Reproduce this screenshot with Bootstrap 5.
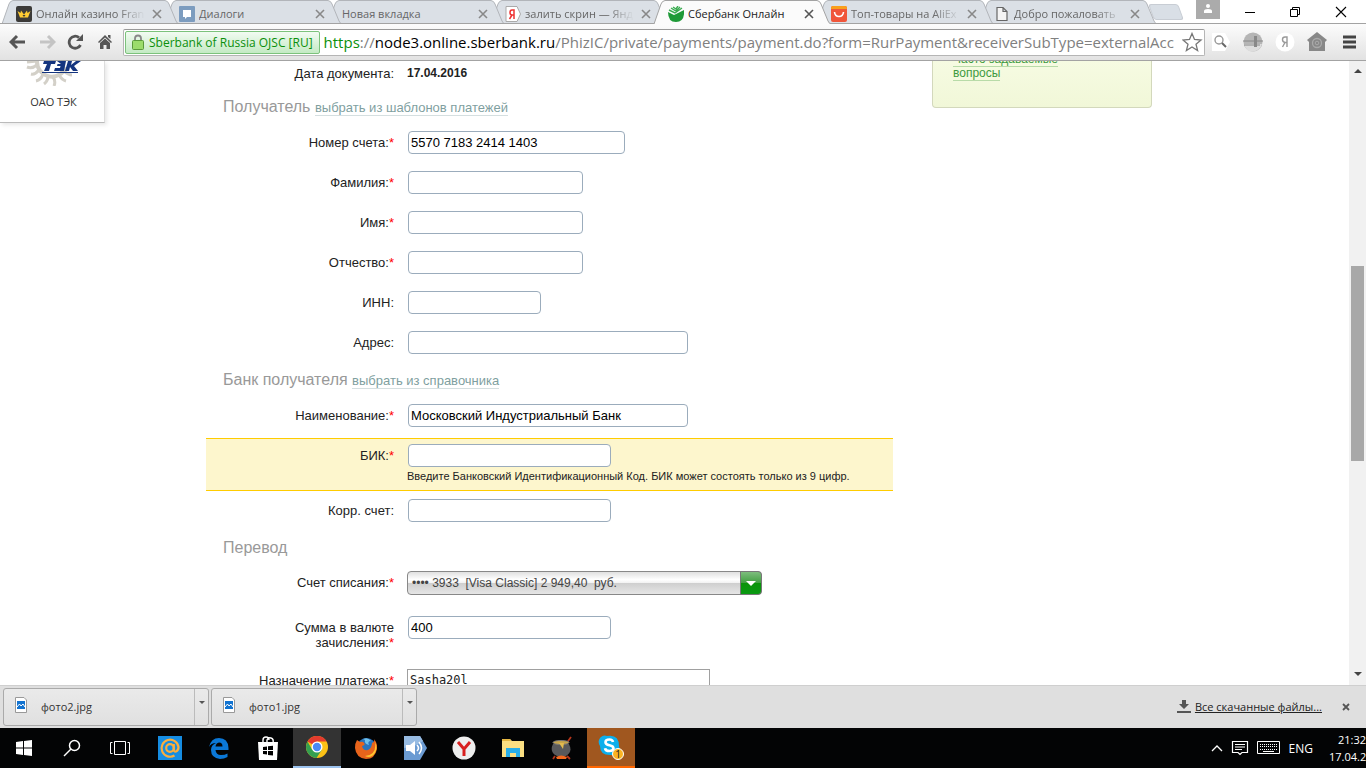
<!DOCTYPE html>
<html lang="ru">
<head>
<meta charset="utf-8">
<meta name="viewport" content="width=device-width, initial-scale=1">
<title>Сбербанк Онлайн</title>
<link href="https://cdn.jsdelivr.net/npm/bootstrap@5.3.0/dist/css/bootstrap.min.css" rel="stylesheet">
<style>
:root{--ui:"Open Sans","Noto Sans",sans-serif;--page:"Liberation Sans",Arial,sans-serif}
body{font:13px/15px var(--page);color:#222;background:#fff}
button{border:0;background:none;padding:0;color:inherit}
svg{display:block;flex:none}
/* tabs */
.tabstrip{height:24px;padding-left:2px;font:11px/24px var(--ui);position:relative}
.tabstrip::after{content:"";position:absolute;left:0;right:0;bottom:0;height:1px;background:#a3a3a3;z-index:8}
.tab-item{flex:0 1 163px;min-width:0;height:24px;position:relative;padding:2px 0 0 14px;color:#666}
.tab-shape{position:absolute;left:0;top:0;width:calc(100% + 15px);height:24px}
.tab-body{position:relative;height:24px}
.tab-name{flex:1 1 0;min-width:0;overflow:hidden;white-space:nowrap}
.tab-fade{-webkit-mask-image:linear-gradient(90deg,#000 75%,transparent);mask-image:linear-gradient(90deg,#000 75%,transparent)}
.tab-item.current{z-index:9!important;color:#222}
.tab-x{width:16px}
.newtab{width:30px;height:16px;margin:4px 0 0 8px;background:#d9dfe6;border:1px solid #c8cdd4;transform:skewX(20deg);border-radius:3px}
.userbox{width:24px;height:19px;background:#ababab}
.winbtn{width:46px;height:24px}
/* toolbar */
.toolbar{height:37px;background:linear-gradient(#fcfcfc,#e2e2e2);border-bottom:1px solid #a3a3a3;padding:0 1px 0 3px}
.navbtn{width:29px;flex:none}
.navbtn svg{margin:auto}
.addr{height:27px;background:#fff;border:1px solid #b5b5b5;border-top-color:#999;border-radius:2px;margin-left:4px;padding-left:1px;min-width:0}
.evbox{height:23px;border:1px solid #7cc27c;border-radius:2px;background:linear-gradient(#f2fbf2,#c4eac4);color:#0b8f0b;font:12px/21px var(--ui);padding:0 6px 0 5px;white-space:nowrap}
.urltext{font:15px/24px var(--ui);color:#808080;white-space:nowrap;overflow:hidden;min-width:0}
.ext{width:32px;flex:none}
/* page */
.viewport{min-height:0;overflow:hidden}
.leftcol{width:206px}
.payee{width:105px;height:62px;border-right:1px solid #ddd;border-bottom:1px solid #bbb;box-shadow:2px 2px 4px #e8e8e8;color:#333;font:11px/15px var(--ui);padding-left:3px}
.payform{flex:0 1 687px;min-width:0}
.frow{display:flex;gap:13px;min-height:40px;padding-top:8px}
.frow>label,.frow>.flabel{width:188px;flex:none;text-align:right;padding-top:4px}
.frow b.req{color:#f00;font-weight:400}
.sect{height:33px;line-height:33px;padding-left:17px;font-size:16px;color:#999;margin:0;font-weight:400}
.sect a{font-size:13px;color:#7f9f9f;text-decoration:none;border-bottom:1px solid #d5dfe0}
.txt{height:23px;border:1px solid #9bacbc;border-radius:4px;padding:0 2px;margin-left:1px;font:13px/21px var(--page);color:#000;background:#fff;max-width:100%}
.w-s{width:133px}.w-m{width:175px}.w-c{width:203px}.w-n{width:217px}.w-l{width:280px}
.hint{margin-top:2px;border-top:1px solid #fc0;border-bottom:1px solid #fc0;background:#fdf6cd;min-height:53px;padding-top:5px}
.hint small{display:block;font-size:11px;line-height:14px;margin-top:2px}
.frow-acct{min-height:44px;padding-top:7px}
.frow-sum{min-height:53px}
.acct{position:relative;width:355px;height:24px}
.acct select{appearance:none;width:100%;height:24px;border:1px solid #888;border-radius:4px;padding:0 4px;font:12px/22px var(--page);color:#444;background:linear-gradient(#e0e0e0,#fff 35%,#f3f3f3 48%,#cfcfcf 52%,#e6e6e6)}
.acct span{position:absolute;right:0;top:0;width:22px;height:24px;border:1px solid #777;border-radius:0 4px 4px 0;background:linear-gradient(#7dbd7d,#43a043 48%,#0a930a 52%,#0a9a12);pointer-events:none}
.note{width:303px;height:60px;border:1px solid #a0a0a0;padding:2px;font:12px/17px "DejaVu Sans Mono",monospace;color:#222;resize:none}
.faq{width:220px;height:47px;margin-left:39px;border:1px solid #d3d8bc;border-top:0;border-radius:0 0 4px 4px;background:linear-gradient(#f6fbe2,#f1f7d8);padding-left:20px;overflow:hidden;font-size:12px;line-height:14px}
.faq a{color:#3e9a3e;text-decoration:none;border-bottom:1px solid #b8dba8}
.faq p{width:130px;margin:-9px 0 0}
.sbar{width:17px;background:#f1f1f1}
.sbar-btn{height:17px}
.thumb{width:13px;background:#a8a8a8;flex:195 0 0}
/* downloads */
.dlbar{height:43px;background:#dfdfdf;border-top:1px solid #cfcfcf;padding:0 16px 0 3px;font:11px/16px var(--ui);color:#333}
.dlitem{width:206px;height:38px;border:1px solid #aaa;border-radius:3px;background:linear-gradient(#eaeaea,#e0e0e0);margin-right:2px}
.dlitem>svg{margin:0 14px 4px 11px}
.dlitem .more{width:14px;border-left:1px solid #bbb;height:36px}
.dlbar a{color:#222}
/* taskbar */
.taskbar{height:40px;background:#030405;color:#fff;font:12px/17px var(--ui)}
.tb{width:48px;height:40px;display:flex;align-items:center;justify-content:center;flex:none;position:relative}
.tb.open{background:#333;border-bottom:2px solid #9cc3ee}
.tb.alert-on{background:#a0571f;border-bottom:2px solid #f60}
.clock{width:37px;flex:none;overflow:hidden;font-size:11px;white-space:nowrap}
.clock time{display:block}
</style>
</head>
<body>
<div class="d-flex flex-column vh-100 overflow-hidden">

<header class="flex-shrink-0">
<div class="tabstrip d-flex" id="tabs">
  <div class="tab-item" style="z-index:7"><svg class="tab-shape" viewBox="0 0 178 24" preserveAspectRatio="none"><path d="M0 24L7 4Q8 1 11 .5H163Q166 1 167 4L174 21Q175 24 178 24Z" fill="#dbe0e6" stroke="#b2b5ba"/></svg>
    <div class="tab-body d-flex align-items-center gap-1"><svg width="16" height="16"><rect width="16" height="16" rx="2" fill="#3b3a38"/><path d="M1.500 5L4.500 7L5 4.500L8 8.500L11 4.500L11.500 7L14.500 5L12 11.500H4Z" fill="#fc3"/><path d="M6.500 9H9.500L8 11Z" fill="#3b3a38"/></svg><span class="tab-name tab-fade">Онлайн казино Fran</span><button class="tab-x" aria-label="Закрыть"><svg width="10" height="10" class="mx-auto"><path d="M1 1L9 9M9 1L1 9" stroke="#888" stroke-width="1.6"/></svg></button></div></div>
  <div class="tab-item" style="z-index:6"><svg class="tab-shape" viewBox="0 0 178 24" preserveAspectRatio="none"><path d="M0 24L7 4Q8 1 11 .5H163Q166 1 167 4L174 21Q175 24 178 24Z" fill="#dbe0e6" stroke="#b2b5ba"/></svg>
    <div class="tab-body d-flex align-items-center gap-1"><svg width="16" height="16"><rect width="16" height="16" rx="1" fill="#7c9cbf"/><path d="M4 4H12V11H8L6 13V11H4Z" fill="#fff"/></svg><span class="tab-name">Диалоги</span><button class="tab-x" aria-label="Закрыть"><svg width="10" height="10" class="mx-auto"><path d="M1 1L9 9M9 1L1 9" stroke="#888" stroke-width="1.6"/></svg></button></div></div>
  <div class="tab-item" style="z-index:5"><svg class="tab-shape" viewBox="0 0 178 24" preserveAspectRatio="none"><path d="M0 24L7 4Q8 1 11 .5H163Q166 1 167 4L174 21Q175 24 178 24Z" fill="#dbe0e6" stroke="#b2b5ba"/></svg>
    <div class="tab-body d-flex align-items-center gap-1"><span class="tab-name">Новая вкладка</span><button class="tab-x" aria-label="Закрыть"><svg width="10" height="10" class="mx-auto"><path d="M1 1L9 9M9 1L1 9" stroke="#888" stroke-width="1.6"/></svg></button></div></div>
  <div class="tab-item" style="z-index:4"><svg class="tab-shape" viewBox="0 0 178 24" preserveAspectRatio="none"><path d="M0 24L7 4Q8 1 11 .5H163Q166 1 167 4L174 21Q175 24 178 24Z" fill="#dbe0e6" stroke="#b2b5ba"/></svg>
    <div class="tab-body d-flex align-items-center gap-1"><svg width="16" height="16"><path d="M1 .5H12L15.500 8L12 15.500H1Z" fill="#fff" stroke="#aaa"/><path d="M9 13V4H7Q5 4 5 6.500T7 9H9M7 9L4.500 13" fill="none" stroke="#e33" stroke-width="1.500"/></svg><span class="tab-name tab-fade">залить скрин — Янд</span><button class="tab-x" aria-label="Закрыть"><svg width="10" height="10" class="mx-auto"><path d="M1 1L9 9M9 1L1 9" stroke="#888" stroke-width="1.6"/></svg></button></div></div>
  <div class="tab-item current"><svg class="tab-shape" viewBox="0 0 178 24" preserveAspectRatio="none"><path d="M0 24L7 4Q8 1 11 .5H163Q166 1 167 4L174 21Q175 24 178 24Z" fill="#fbfbfb"/><path d="M0 24L7 4Q8 1 11 .5H163Q166 1 167 4L174 21Q175 24 178 24" fill="none" stroke="#a3a3a3"/></svg>
    <div class="tab-body d-flex align-items-center gap-1"><svg width="16" height="16"><path d="M0 6L6 9L16 4Q17 16 8 16Q0 16 0 6Z" fill="#1f9a38"/><path d="M1 4L7 7L14 2M3 2L8 5L12 1M5 1L8 3L10 0" fill="none" stroke="#3aab50" stroke-width="1.400"/></svg><span class="tab-name">Сбербанк Онлайн</span><button class="tab-x" aria-label="Закрыть"><svg width="10" height="10" class="mx-auto"><path d="M1 1L9 9M9 1L1 9" stroke="#555" stroke-width="1.6"/></svg></button></div></div>
  <div class="tab-item" style="z-index:3"><svg class="tab-shape" viewBox="0 0 178 24" preserveAspectRatio="none"><path d="M0 24L7 4Q8 1 11 .5H163Q166 1 167 4L174 21Q175 24 178 24Z" fill="#dbe0e6" stroke="#b2b5ba"/></svg>
    <div class="tab-body d-flex align-items-center gap-1"><svg width="16" height="16"><rect width="16" height="16" rx="2" fill="#f0563a"/><path d="M0 3V2Q0 0 2 0H14Q16 0 16 2V3Z" fill="#f9a01b"/><path d="M3.500 6Q4 10.500 8 10.500T12.500 6" fill="none" stroke="#fff" stroke-width="1.600"/></svg><span class="tab-name tab-fade">Топ-товары на AliEx</span><button class="tab-x" aria-label="Закрыть"><svg width="10" height="10" class="mx-auto"><path d="M1 1L9 9M9 1L1 9" stroke="#888" stroke-width="1.6"/></svg></button></div></div>
  <div class="tab-item" style="z-index:2"><svg class="tab-shape" viewBox="0 0 178 24" preserveAspectRatio="none"><path d="M0 24L7 4Q8 1 11 .5H163Q166 1 167 4L174 21Q175 24 178 24Z" fill="#dbe0e6" stroke="#b2b5ba"/></svg>
    <div class="tab-body d-flex align-items-center gap-1"><svg width="16" height="16"><path d="M3 1.500H9L13 5.500V14.500H3ZM9 1.500V5.500H13" fill="#f4f4f4" stroke="#666" stroke-width="1.200"/></svg><span class="tab-name tab-fade">Добро пожаловать</span><button class="tab-x" aria-label="Закрыть"><svg width="10" height="10" class="mx-auto"><path d="M1 1L9 9M9 1L1 9" stroke="#888" stroke-width="1.6"/></svg></button></div></div>
  <button class="newtab" aria-label="Новая вкладка"></button>
  <div class="d-flex ms-auto">
    <button class="userbox d-flex justify-content-center pt-1 me-2" aria-label="Пользователь"><svg width="10" height="9"><circle cx="5" cy="2" r="2" fill="#fff"/><path d="M1 9V7Q1 5 5 5T9 7V9Z" fill="#fff"/></svg></button>
    <button class="winbtn" aria-label="Свернуть"><svg width="46" height="24"><path d="M17 12.500H27" stroke="#000"/></svg></button>
    <button class="winbtn" aria-label="Развернуть"><svg width="46" height="24" fill="none" stroke="#000"><path d="M16.500 9.500H23.500V16.500H16.500ZM18.500 9V7.500H25.500V14.500H24"/></svg></button>
    <button class="winbtn" aria-label="Закрыть окно"><svg width="46" height="24"><path d="M16 7L26 17M26 7L16 17" stroke="#000" stroke-width="1.100"/></svg></button>
  </div>
</div>

<nav class="toolbar d-flex align-items-center" aria-label="Навигация">
  <button class="navbtn" aria-label="Назад"><svg width="18" height="16" fill="none" stroke="#555" stroke-width="3"><path d="M2 8H16M8 2L2 8L8 14"/></svg></button>
  <button class="navbtn" aria-label="Вперёд"><svg width="18" height="16" fill="none" stroke="#c4c4c4" stroke-width="3"><path d="M2 8H16M10 2L16 8L10 14"/></svg></button>
  <button class="navbtn" aria-label="Обновить"><svg width="18" height="16"><path d="M13.500 11A6 6 0 1 1 12 3.600" fill="none" stroke="#555" stroke-width="2.800"/><path d="M16 0V7H9Z" fill="#555"/></svg></button>
  <button class="navbtn" aria-label="Домой"><svg width="16" height="16"><path d="M8 1L15 8L14 9L8 3.500L2 9L1 8ZM11 1H13.500V5L11 3ZM3 9L8 4.500L13 9V15H9.500V11H6.500V15H3Z" fill="#555"/></svg></button>
  <div class="addr flex-grow-1 d-flex align-items-center">
    <span class="evbox d-flex align-items-center gap-1"><svg width="14" height="16"><path d="M4 8V4.500Q4 1.500 7 1.500T10 4.500V8" fill="none" stroke="#888" stroke-width="1.800"/><rect x="1.500" y="6.500" width="11" height="9" rx="1" fill="#9bdc6b" stroke="#5a9a3a"/></svg>Sberbank of Russia OJSC [RU]</span>
    <span class="urltext flex-grow-1 ps-1"><span style="color:#0b8f0b">https</span>://<span style="color:#000">node3.online.sberbank.ru</span>/PhizIC/private/payments/payment.do?form=RurPayment&amp;receiverSubType=externalAcc</span>
    <button aria-label="В закладки"><svg width="22" height="20"><path d="M10 1.500L12.500 7.500L19 8L14 12.200L15.600 18.500L10 15L4.400 18.500L6 12.200L1 8L7.500 7.500Z" fill="#fff" stroke="#777" stroke-width="1.300"/></svg></button>
  </div>
  <button class="ext" aria-label="Поиск"><svg width="20" height="20" class="mx-auto"><path d="M1 1H14L19 10L14 19H1Z" fill="#fff"/><circle cx="8" cy="8" r="4" fill="none" stroke="#999" stroke-width="1.400"/><path d="M11 11L15 15" stroke="#666" stroke-width="2"/></svg></button>
  <button class="ext" aria-label="Расширение"><svg width="20" height="20" class="mx-auto"><circle cx="10" cy="10" r="9.500" fill="#b5b5b5"/><path d="M1 12H19Q17 19 10 19.500T1 12Z" fill="#ddd"/><path d="M0 9H20M1 13H17" stroke="#888"/><path d="M11 4H14V15H11Z" fill="#888"/></svg></button>
  <button class="ext" aria-label="Яндекс"><svg width="20" height="20" class="mx-auto"><circle cx="10" cy="10" r="9.500" fill="#fff"/><path d="M12 15V5H10Q7.500 5 7.500 7.500T10 10.500H12M10 10.500L7.500 15" fill="none" stroke="#999" stroke-width="1.400"/></svg></button>
  <button class="ext" aria-label="Дом"><svg width="20" height="20" class="mx-auto"><path d="M10 0L20 8L18 10V19H2V10L0 8Z" fill="#888"/><circle cx="10" cy="11" r="4.500" fill="none" stroke="#aaa" stroke-width="1.300"/><circle cx="10" cy="11" r="1.800" fill="none" stroke="#aaa"/></svg></button>
  <button class="ext" aria-label="Меню"><svg width="13" height="14" class="mx-auto"><path d="M0 2H13M0 7H13M0 12H13" stroke="#444" stroke-width="3"/></svg></button>
</nav>
</header>

<div class="viewport flex-grow-1 d-flex">
  <div class="leftcol flex-shrink-0">
    <div class="payee d-flex flex-column align-items-center">
      <svg width="56" height="25"><g fill="none" stroke="#d3d0c8"><path d="M11 0A15 15 0 0 0 40 6" stroke-width="4"/><path d="M11 4Q6 8 1 6M13 9Q9 14 5 13M17 13Q15 19 10 20M22 15Q22 20 18 23M27 16Q30 20 28 25M33 14Q36 19 40 20M38 10Q42 14 46 14M11 0L1 1" stroke-width="3"/></g><path d="M18 0H30L29 3H25L23 10H18L21 3H17ZM31 0H40L38 10H28L29 7H34L34.500 5H31L31.500 3H35ZM42 0H46L45 4L50 0H55L48 5L52 10H47L44 6L43 10H39Z" fill="#15357f"/><path d="M16 11.500H52" stroke="#15357f"/></svg>
      <span class="mt-2">ОАО ТЭК</span>
    </div>
  </div>

  <form class="payform" onsubmit="return false">
    <div class="d-flex" style="height:29px;gap:13px;padding-top:5px"><div class="flex-shrink-0 text-end" style="width:188px">Дата документа:</div><strong style="font-size:12px">17.04.2016</strong></div>
    <h2 class="sect">Получатель <a href="#">выбрать из шаблонов платежей</a></h2>
    <div class="frow"><label for="acc">Номер счета:<b class="req">*</b></label><input id="acc" class="txt w-n" value="5570 7183 2414 1403"></div>
    <div class="frow"><label for="fam">Фамилия:<b class="req">*</b></label><input id="fam" class="txt w-m"></div>
    <div class="frow"><label for="nam">Имя:<b class="req">*</b></label><input id="nam" class="txt w-m"></div>
    <div class="frow"><label for="pat">Отчество:<b class="req">*</b></label><input id="pat" class="txt w-m"></div>
    <div class="frow"><label for="inn">ИНН:</label><input id="inn" class="txt w-s"></div>
    <div class="frow"><label for="adr">Адрес:</label><input id="adr" class="txt w-l"></div>
    <h2 class="sect">Банк получателя <a href="#">выбрать из справочника</a></h2>
    <div class="frow"><label for="bank">Наименование:<b class="req">*</b></label><input id="bank" class="txt w-l" value="Московский Индустриальный Банк"></div>
    <div class="frow hint"><label for="bik">БИК:<b class="req">*</b></label><div><input id="bik" class="txt w-c d-block"><small>Введите Банковский Идентификационный Код. БИК может состоять только из 9 цифр.</small></div></div>
    <div class="frow"><label for="cor">Корр. счет:</label><input id="cor" class="txt w-c"></div>
    <h2 class="sect">Перевод</h2>
    <div class="frow frow-acct"><label for="src">Счет списания:<b class="req">*</b></label><div class="acct"><select id="src"><option>•••• 3933&nbsp; [Visa Classic] 2 949,40&nbsp; руб.</option></select><span><svg width="20" height="22"><path d="M5 9H15L10 14Z" fill="#fff"/></svg></span></div></div>
    <div class="frow frow-sum"><label for="sum">Сумма в валюте<br>зачисления:<b class="req">*</b></label><input id="sum" class="txt w-c" value="400"></div>
    <div class="frow"><label for="why">Назначение платежа:<b class="req">*</b></label><textarea id="why" class="note">Sasha20l</textarea></div>
  </form>

  <aside class="faq flex-shrink-0"><p><a href="#">Часто задаваемые вопросы</a></p></aside>

  <div class="sbar ms-auto d-flex flex-column align-items-center flex-shrink-0" aria-hidden="true">
    <div class="sbar-btn pt-2"><svg width="8" height="4"><path d="M0 4L4 0L8 4Z" fill="#444"/></svg></div>
    <div style="flex:188 0 0"></div><div class="thumb"></div><div style="flex:207 0 0"></div>
    <div class="sbar-btn pt-1"><svg width="8" height="4"><path d="M0 0L4 4L8 0Z" fill="#444"/></svg></div>
  </div>
</div>

<div class="dlbar d-flex align-items-center flex-shrink-0">
  <div class="dlitem d-flex align-items-center"><svg width="12" height="16"><path d="M.5 .5H9L11.500 3V15.500H.5Z" fill="#fff" stroke="#999"/><rect x="2" y="4" width="8" height="8" fill="#1273d0"/><path d="M2 10L4.500 7L6 9L8 7L10 10" fill="none" stroke="#fff"/></svg><span class="flex-grow-1">фото2.jpg</span><button class="more" aria-label="Действия"><svg width="6" height="4" class="mx-auto mb-2"><path d="M0 0H6L3 3Z" fill="#555"/></svg></button></div>
  <div class="dlitem d-flex align-items-center"><svg width="12" height="16"><path d="M.5 .5H9L11.500 3V15.500H.5Z" fill="#fff" stroke="#999"/><rect x="2" y="4" width="8" height="8" fill="#1273d0"/><path d="M2 10L4.500 7L6 9L8 7L10 10" fill="none" stroke="#fff"/></svg><span class="flex-grow-1">фото1.jpg</span><button class="more" aria-label="Действия"><svg width="6" height="4" class="mx-auto mb-2"><path d="M0 0H6L3 3Z" fill="#555"/></svg></button></div>
  <svg width="14" height="14" class="ms-auto me-1"><path d="M5 0H9V4H12L7 9L2 4H5ZM0 11H14V13H0Z" fill="#555"/></svg>
  <a href="#">Все скачанные файлы...</a>
  <button style="margin-left:20px" aria-label="Закрыть панель"><svg width="8" height="8"><path d="M1 1L7 7M7 1L1 7" stroke="#555" stroke-width="1.800"/></svg></button>
</div>

<footer class="taskbar d-flex align-items-center flex-shrink-0">
  <div class="d-flex">
  <button class="tb" aria-label="Пуск"><svg width="16" height="16" fill="#fff"><path d="M0 2L7 1V7.500H0ZM8 1L16 0V7.500H8ZM0 8.500H7V15L0 14ZM8 8.500H16V16L8 15Z"/></svg></button>
  <button class="tb" aria-label="Поиск"><svg width="18" height="18" fill="none" stroke="#fff" stroke-width="1.500"><circle cx="11.500" cy="6.500" r="5"/><path d="M8 10L1 17"/></svg></button>
  <button class="tb" aria-label="Представление задач"><svg width="20" height="16" fill="none" stroke="#fff"><path d="M4.500 1.500H15.500V14.500H4.500ZM2.500 2.500H.5V13.500H2.500M17.500 2.500H19.500V13.500H17.500"/></svg></button>
  </div>
  <div class="d-flex ps-1" style="gap:1px;margin-left:-2px">
  <button class="tb" aria-label="Почта"><svg width="24" height="24" fill="none" stroke="#fbae3c" stroke-width="2.200"><rect width="24" height="24" fill="#168de2" stroke="none"/><circle cx="12" cy="12" r="3.800"/><path d="M15.800 8V13.500Q16 16 18 15.500Q20.500 14.500 20.500 11A8.500 8.500 0 1 0 16.500 19.500"/></svg></button>
  <button class="tb" aria-label="Edge"><svg width="22" height="22"><path d="M1 10Q3 1 11 1Q20 1 20.500 11V13H7.500Q8 18 13 18Q17 18 19.500 16.500V20Q16 22 12 22Q3 21 3 13Q3 8 8 6Q3 6 1 10ZM7.500 9.500H14.500Q14.500 5.500 11 5.500Q8 6 7.500 9.500Z" fill="#0b78d7" fill-rule="evenodd"/></svg></button>
  <button class="tb" aria-label="Магазин"><svg width="22" height="24"><path d="M1 6H21L20 24H2Z" fill="#fff"/><path d="M6 7V4Q6 1 9 1T12 4M10 6V4Q11 1 14 2T16 7" fill="none" stroke="#fff" stroke-width="1.400"/><path d="M6 11L10 10.500V14H6ZM11 10.300L16 9.800V14H11ZM6 15H10V18.500L6 18ZM11 15H16V19.500L11 19Z" fill="#000"/></svg></button>
  <button class="tb open" aria-label="Chrome"><svg width="22" height="22"><circle cx="11" cy="11" r="11" fill="#fbc116"/><path d="M11 11L1.500 5.500A11 11 0 0 1 20.600 5.500H11Z" fill="#e33b2e"/><path d="M1.500 5.500A11 11 0 0 0 10.500 22L15.800 13.700L11 11L6.200 13.700Z" fill="#34a050"/><circle cx="11" cy="11" r="5.500" fill="#fff"/><circle cx="11" cy="11" r="4.200" fill="#4a8af4"/></svg></button>
  <button class="tb" aria-label="Firefox"><svg width="22" height="22"><circle cx="11.500" cy="10.500" r="9.500" fill="#2a74bd"/><path d="M8 2Q13 0 16 4Q12 4 14 8Q9 7 10 3Z" fill="#6fc0ea"/><path d="M2 3L5 5Q8 4 9 6Q11 8 7 9Q8 14 13 13Q17 11 17 6Q20 5 19 2Q23 7 22 12Q20 22 11 22Q1 21 0 11Q0 6 2 3Z" fill="#e8641b"/><path d="M20 5Q22 18 10 19Q16 22 20 16Q23 11 20 5Z" fill="#fdc62f"/></svg></button>
  <button class="tb" aria-label="Звук"><svg width="24" height="24"><path d="M1 0H17L24 12L17 24H1Z" fill="#6b9bd2"/><path d="M1 0H17L20 5Q10 12 1 12Z" fill="#97bbe2"/><path d="M3 9H7L12 5V19L7 15H3Z" fill="#fff"/><path d="M14 9Q17 12 14 15M16 6Q21 12 16 18" fill="none" stroke="#fff" stroke-width="1.500"/></svg></button>
  <button class="tb" aria-label="Яндекс Браузер"><svg width="24" height="24"><circle cx="12" cy="12" r="11.500" fill="#eee"/><path d="M6 6L12 13M18 6L12 13V20" fill="none" stroke="#d8201f" stroke-width="3"/></svg></button>
  <button class="tb" aria-label="Проводник"><svg width="22" height="20"><path d="M0 1H8L10 3H22V19H0Z" fill="#fbdf82"/><path d="M0 1H8L9 3H0Z" fill="#e6b843"/><path d="M4 19V10H18V19H14V15H8V19Z" fill="#29aee8"/></svg></button>
  <button class="tb" aria-label="Котёл"><svg width="24" height="24"><path d="M5 20L3 23M17 20L20 23M16 8L21 1" stroke="#b5361c" stroke-width="1.800"/><path d="M3 8H19Q23 16 16 20H7Q-1 16 3 8Z" fill="#59595b"/><ellipse cx="11" cy="6.500" rx="8" ry="2" fill="#c9a54a" stroke="#777"/><path d="M9 7L13 13L14 7Z" fill="#e3bb4e"/><path d="M6 21Q11 18 17 21L16 23H7Z" fill="#f5691d"/></svg></button>
  <button class="tb alert-on" aria-label="Skype"><svg width="26" height="26"><path d="M1 6A6 6 0 0 1 9 2Q21 0 21 12L22 17A6 6 0 0 1 14 21Q2 22 2 12Q0 9 1 6Z" fill="#0cafec"/><path d="M15 8Q14.500 5.500 11.500 5.500Q7.500 5.500 7.500 8.200Q7.500 10.500 11.500 11.300T15.500 14.500Q15 17 11.500 17Q7.500 17 7 14.200" fill="none" stroke="#fff" stroke-width="2.600"/><circle cx="20" cy="20" r="5.500" fill="#fbb321" stroke="#fff"/><text x="20" y="23.500" text-anchor="middle" font-size="10" fill="#222" font-family="Open Sans">1</text></svg></button>
  </div>
  <div class="d-flex align-items-center ms-auto">
    <svg width="12" height="8" class="me-2" fill="none" stroke="#fff" stroke-width="1.300"><path d="M1 7L6 2L11 7"/></svg>
    <svg width="18" height="16" class="me-2" fill="none" stroke="#fff" stroke-width="1.200"><path d="M1.500 1.500H16.500V12.500H11L9 14.500L7 12.500H1.500ZM4 4.500H14M4 7H14M4 9.500H11"/></svg>
    <svg width="24" height="14" class="me-2" fill="none" stroke="#fff"><path d="M.5 .5H22.500V12.500H.5ZM6 10.500H17"/><path d="M3 3.500H21M3 5.500H21M3 8.500H21" stroke-dasharray="1 1"/></svg>
    <span class="me-3">ENG</span>
    <div class="clock"><time class="text-end">21:32</time><time>17.04.20</time></div>
  </div>
</footer>
</div>
<script src="https://cdn.jsdelivr.net/npm/bootstrap@5.3.0/dist/js/bootstrap.bundle.min.js"></script>
</body>
</html>
